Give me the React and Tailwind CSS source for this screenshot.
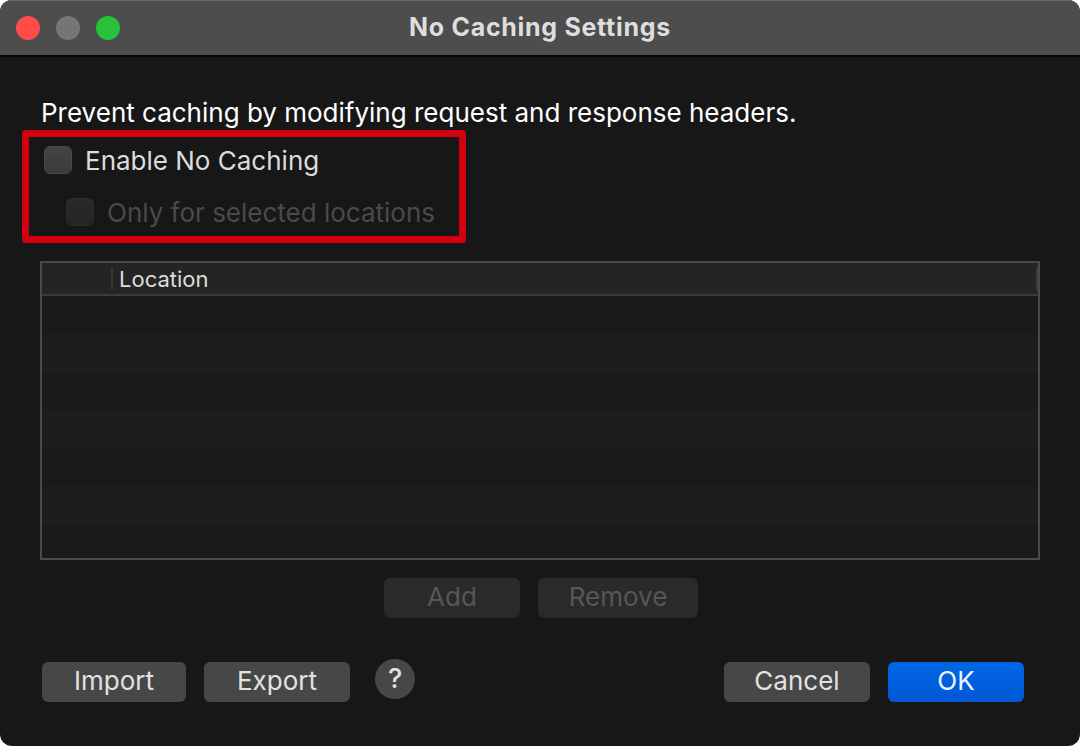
import React from "react";

function Checkbox({ dim }) {
  return (
    <div
      className={
        "w-[28px] h-[28px] rounded-[6px] shrink-0 " +
        (dim
          ? "bg-gradient-to-b from-[#2a2a2a] to-[#242424] border border-[#2e2e2e]"
          : "bg-gradient-to-b from-[#444444] to-[#3a3a3a] border border-[#4a4a4a]")
      }
    />
  );
}

export default function App() {
  const rows = [0, 1, 2, 3, 4, 5, 6];
  return (
    <div className="w-[1080px] h-[746px] bg-white" style={{ fontFamily: "Inter, 'Noto Sans', sans-serif" }}>
      <div className="w-full h-full rounded-[12px] overflow-hidden bg-[#171717] flex flex-col">
        {/* Title bar */}
        <div className="h-[57px] shrink-0 bg-[#4d4d4d] border-t border-[#6b6b6b] border-b-2 border-b-[#050505] relative flex items-center justify-center">
          <div className="absolute left-[16px] top-[15px] flex gap-[16px]">
            <div className="w-[24px] h-[24px] rounded-full bg-[#ff4b4a]" />
            <div className="w-[24px] h-[24px] rounded-full bg-[#757575]" />
            <div className="w-[24px] h-[24px] rounded-full bg-[#28c33a]" />
          </div>
          <div className="text-[25px] font-bold text-[#dedede] leading-none -mt-[2px] tracking-[0.7px]">No Caching Settings</div>
        </div>

        {/* Body */}
        <div className="flex-1 flex flex-col px-[40px] pt-[41px]">
          <div className="text-[26px] text-white leading-[30px] ml-[1px]">
            Prevent caching by modifying request and response headers.
          </div>

          <div className="-ml-[18px] mt-[2px] w-[444px] h-[113px] border-[7px] border-[#d0000f] rounded-[4px] pl-[15px] pt-[9px] flex flex-col">
            <div className="flex items-center gap-[13px]">
              <Checkbox />
              <span className="text-[26px] text-[#dcdcdc] leading-none mt-[2px]">Enable No Caching</span>
            </div>
            <div className="flex items-center gap-[13px] ml-[22px] mt-[24px]">
              <Checkbox dim />
              <span className="text-[26px] text-[#4a4a4a] leading-none mt-[2px]">Only for selected locations</span>
            </div>
          </div>

          {/* Table */}
          <div className="mt-[18px] w-[1000px] h-[299px] border-2 border-[#4a4a4a] flex flex-col overflow-hidden">
            <div className="h-[33px] shrink-0 bg-[#242424] border-b-2 border-[#3a3a3a] flex items-center">
              <div className="w-[71px] h-[22px] border-r-2 border-[#353535]" />
              <span className="ml-[6px] text-[22px] text-[#dcdcdc] leading-none">Location</span>
              <div className="flex-1" />
              <div className="w-[2px] h-[24px] bg-[#3a3a3a]" />
            </div>
            {rows.map((r) => (
              <div key={r} className={"h-[38px] shrink-0 " + (r % 2 === 0 ? "bg-[#1a1a1a]" : "bg-[#1d1d1d]")} />
            ))}
          </div>

          {/* Add / Remove */}
          <div className="flex gap-[18px] mt-[18px] ml-[344px]">
            <div className="w-[136px] h-[40px] pb-[3px] rounded-[6px] bg-[#2a2a2a] flex items-center justify-center text-[26px] text-[#575757]">Add</div>
            <div className="w-[160px] h-[40px] pb-[3px] rounded-[6px] bg-[#2a2a2a] flex items-center justify-center text-[26px] text-[#575757]">Remove</div>
          </div>

          {/* Bottom buttons */}
          <div className="flex items-center mt-[44px] ml-[2px]">
            <div className="w-[144px] h-[40px] pb-[3px] rounded-[6px] bg-[#474747] flex items-center justify-center text-[26px] text-[#e2e2e2]">Import</div>
            <div className="w-[146px] h-[40px] pb-[3px] ml-[18px] rounded-[6px] bg-[#474747] flex items-center justify-center text-[26px] text-[#e2e2e2]">Export</div>
            <div className="w-[40px] h-[40px] ml-[25px] -mt-[6px] rounded-full bg-[#474747] flex items-center justify-center text-[27px] text-[#e2e2e2] font-medium">?</div>
            <div className="flex-1" />
            <div className="w-[146px] h-[40px] pb-[3px] rounded-[6px] bg-[#474747] flex items-center justify-center text-[26px] text-[#e2e2e2]">Cancel</div>
            <div className="w-[136px] h-[40px] pb-[3px] ml-[18px] mr-[16px] rounded-[6px] bg-gradient-to-b from-[#0066e3] to-[#0058d6] flex items-center justify-center text-[26px] text-[#eef4ff]">OK</div>
          </div>
        </div>
      </div>
    </div>
  );
}
